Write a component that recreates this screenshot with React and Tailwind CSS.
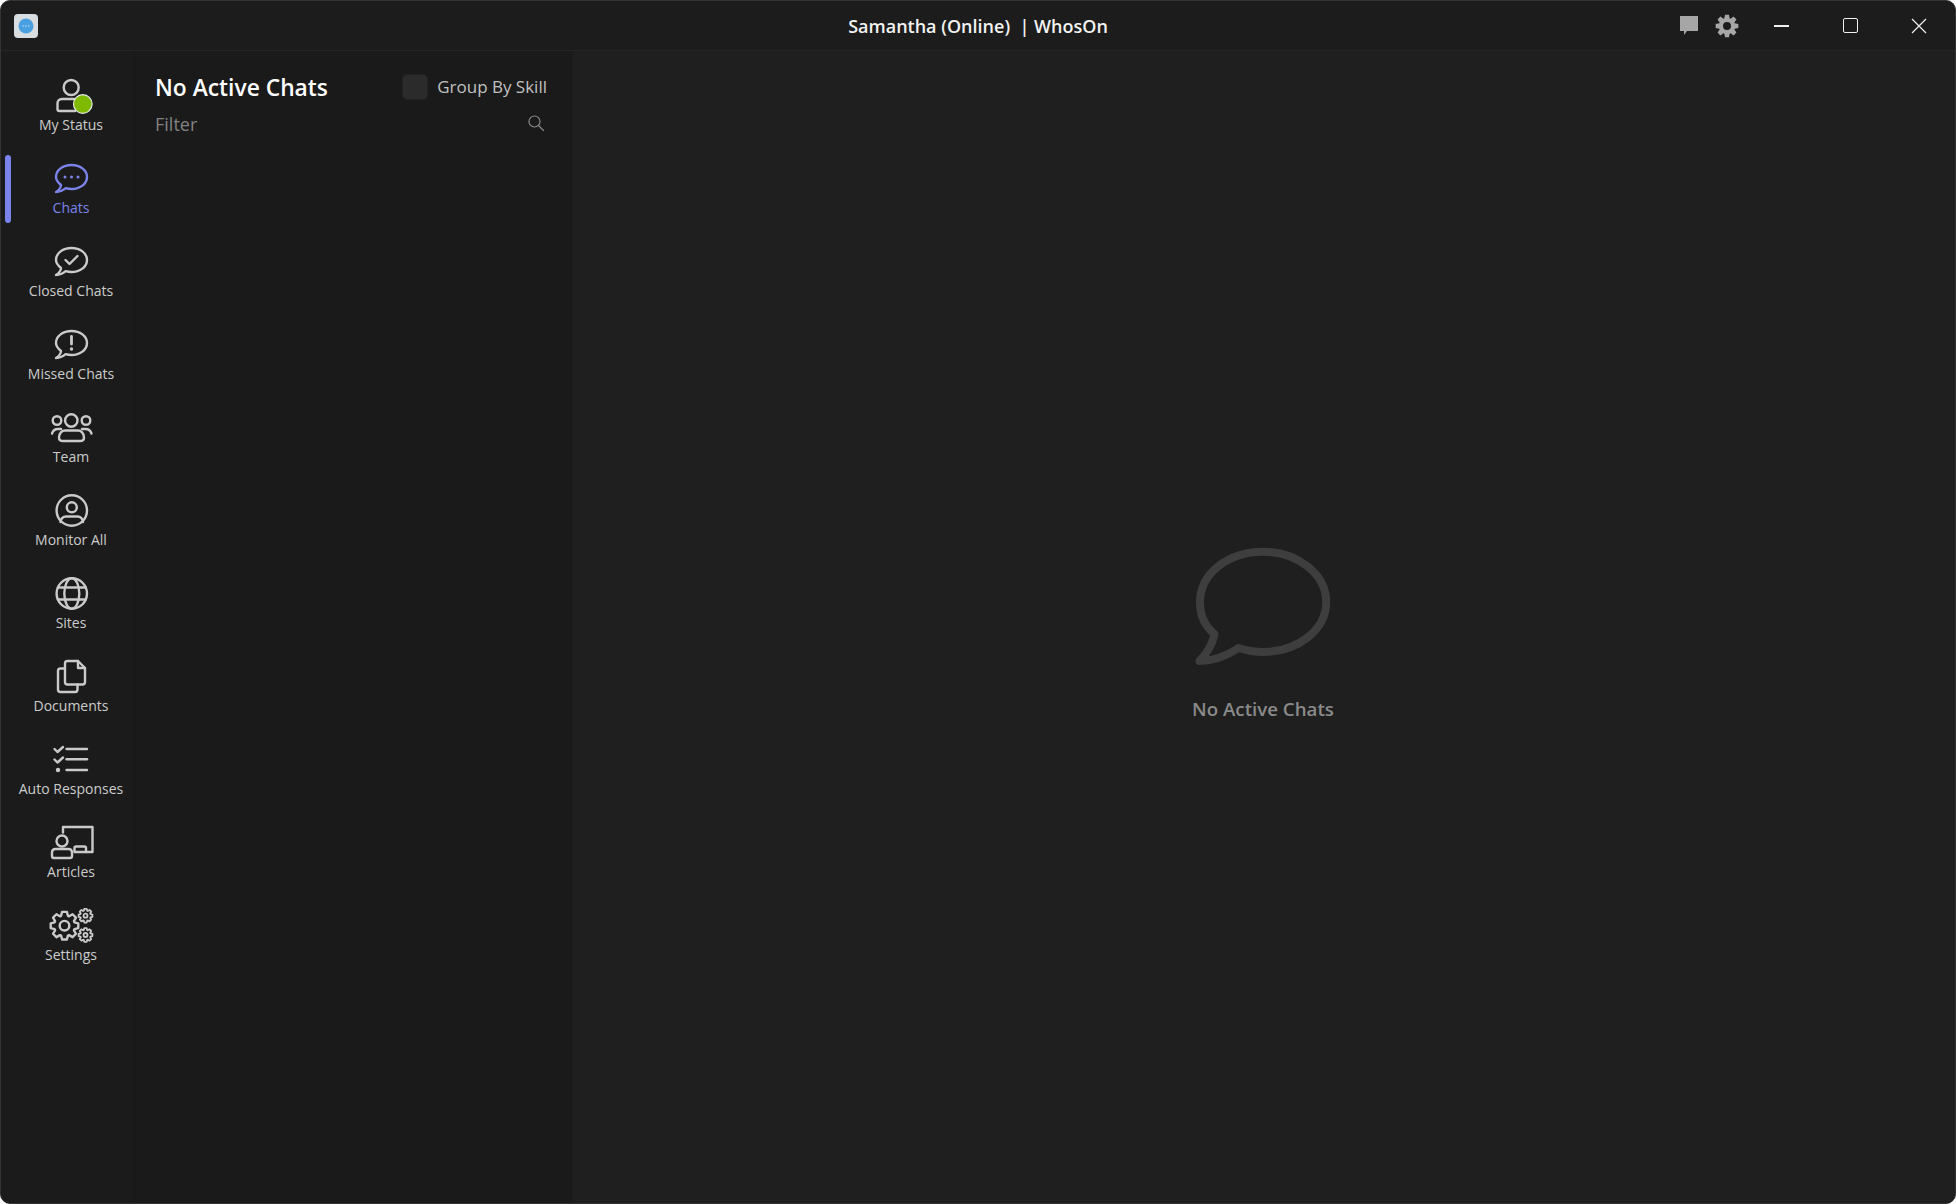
import React from 'react';

// gear outline, used by the settings nav icon and the title bar
const gearPath = (cx, cy, outer, inner, teeth) => {
  const pts = [];
  const step = (Math.PI * 2) / teeth;
  for (let i = 0; i < teeth; i++) {
    const a = i * step - Math.PI / 2;
    const at = (r, o) => `${(cx + r * Math.cos(a + o)).toFixed(2)} ${(cy + r * Math.sin(a + o)).toFixed(2)}`;
    pts.push(at(inner, -step * 0.42), at(outer, -step * 0.22), at(outer, step * 0.22), at(inner, step * 0.42));
  }
  return `M${pts.join('L')}Z`;
};

const BUBBLE = 'M10 27C7 24.5 5 22 5 19C5 12 12 7 20.5 7C29 7 36 12 36 19C36 26 29 31 20.5 31C18.5 31 16.5 30.7 14.7 30.2C12 32.5 8.5 34 5 34C7.5 32.5 9.8 30 10 27Z';

const Svg = ({ children, className = 'text-[#cacaca]' }) => (
  <svg width="40" height="40" viewBox="0 0 40 40" fill="none" stroke="currentColor" strokeWidth="2.4" strokeLinecap="round" strokeLinejoin="round" className={`overflow-visible ${className}`}>
    {children}
  </svg>
);

const StatusIcon = () => (
  <Svg>
    <circle cx="20.2" cy="12.5" r="7.5" />
    <path d="M23 24H11C8 24 6.5 26 6.5 28.5V34C6.5 35.2 7.2 36 8.5 36H24" />
    <circle cx="31.8" cy="29" r="9.3" fill="#7fba00" stroke="#e8e8e8" strokeWidth="1.2" />
  </Svg>
);

const ChatsIcon = () => (
  <Svg className="text-[#7b83eb]">
    <path d={BUBBLE} />
    <circle cx="14" cy="19" r="1.5" fill="currentColor" stroke="none" />
    <circle cx="20.5" cy="19" r="1.5" fill="currentColor" stroke="none" />
    <circle cx="27" cy="19" r="1.5" fill="currentColor" stroke="none" />
  </Svg>
);

const ClosedIcon = () => (
  <Svg>
    <path d={BUBBLE} />
    <path d="M14.5 19L18.5 23L26.5 15" />
  </Svg>
);

const MissedIcon = () => (
  <Svg>
    <path d={BUBBLE} />
    <path d="M20.5 12.5V20" strokeWidth="2.8" />
    <circle cx="20.5" cy="25" r="1.7" fill="currentColor" stroke="none" />
  </Svg>
);

const TeamIcon = () => (
  <Svg>
    <circle cx="20.3" cy="13.5" r="6.2" />
    <circle cx="6" cy="13.5" r="4.3" />
    <circle cx="35" cy="13.5" r="4.3" />
    <path d="M12 34H29C31.5 34 33 32.5 33 30.5C33 26 30 23.5 27 23.5H14C11 23.5 8 26 8 30.5C8 32.5 9.5 34 12 34Z" />
    <path d="M1 26.5C2 23.5 4 22 7 22H10" />
    <path d="M40.5 26.5C39.5 23.5 37.5 22 34.5 22H31" />
  </Svg>
);

const MonitorIcon = () => (
  <Svg>
    <circle cx="20.8" cy="20.5" r="15.2" />
    <circle cx="20.8" cy="17.3" r="5" />
    <path d="M9.5 32C9.5 29 12 26.5 15 26.5H26.5C29.5 26.5 32 29 32 32" />
  </Svg>
);

const SitesIcon = () => (
  <Svg>
    <circle cx="20.8" cy="20.5" r="15.2" />
    <ellipse cx="20.8" cy="20.5" rx="7.5" ry="15.2" />
    <path d="M7 14.5H34.5" />
    <path d="M7 26.5H34.5" />
  </Svg>
);

const DocumentsIcon = () => (
  <Svg>
    <path d="M14 12.5H9.5C8 12.5 7 13.5 7 15V33.5C7 35 8 36 9.5 36H24C25.5 36 26.5 35 26.5 33.5V28.5" />
    <path d="M16.5 5H27L34 12V26C34 27.5 33 28.5 31.5 28.5H16.5C15 28.5 14 27.5 14 26V7.5C14 6 15 5 16.5 5Z" />
    <path d="M27 5V12H34" />
  </Svg>
);

const AutoIcon = () => (
  <Svg>
    <path d="M3.5 10L6.5 13L12 8" />
    <path d="M3.5 20.5L6.5 23.5L12 18.5" />
    <circle cx="7" cy="31" r="2.2" fill="currentColor" stroke="none" />
    <path d="M15.5 10H36" />
    <path d="M15.5 20.3H36" />
    <path d="M15.5 31H36" />
  </Svg>
);

const ArticlesIcon = () => (
  <Svg>
    <path d="M12 10.5V5H41.5V30H24" />
    <path d="M23.5 30V26C23.5 25 24 24.5 25 24.5H33.5C34.5 24.5 35 25 35 26V30" />
    <circle cx="11" cy="19" r="5.5" />
    <path d="M3 36H19C20.2 36 21 35.2 21 34V30.5C21 28.5 19.5 27 17.5 27H4.5C2.5 27 1 28.5 1 30.5V34C1 35.2 1.8 36 3 36Z" />
  </Svg>
);

const SettingsIcon = () => (
  <Svg>
    <path d={gearPath(13.5, 20.7, 14, 10.5, 8)} />
    <circle cx="13.5" cy="20.7" r="4.8" />
    <path d={gearPath(34.5, 10.7, 7, 5.2, 8)} strokeWidth="1.8" />
    <circle cx="34.5" cy="10.7" r="2" strokeWidth="1.8" />
    <path d={gearPath(34.5, 30, 7, 5.2, 8)} strokeWidth="1.8" />
    <circle cx="34.5" cy="30" r="2" strokeWidth="1.8" />
  </Svg>
);

const navItems = [
  { label: 'My Status', icon: StatusIcon },
  { label: 'Chats', icon: ChatsIcon, active: true },
  { label: 'Closed Chats', icon: ClosedIcon },
  { label: 'Missed Chats', icon: MissedIcon },
  { label: 'Team', icon: TeamIcon },
  { label: 'Monitor All', icon: MonitorIcon },
  { label: 'Sites', icon: SitesIcon },
  { label: 'Documents', icon: DocumentsIcon },
  { label: 'Auto Responses', icon: AutoIcon },
  { label: 'Articles', icon: ArticlesIcon },
  { label: 'Settings', icon: SettingsIcon },
];

const TitleBar = () => (
  <div className="grid h-[50px] shrink-0 grid-cols-[1fr_auto_1fr] items-center border-b border-[#252525] bg-[#1c1c1c]">
    <div className="ml-[13px] flex h-6 w-6 items-center justify-center rounded-[4px] bg-[#d8dde2]">
      <svg width="16" height="16" viewBox="0 0 16 16">
        <circle cx="8" cy="8" r="7.5" fill="#4a9fe0" />
        <path d="M4.5 8H11.5" stroke="#e6f2fb" strokeWidth="1.2" strokeDasharray="1.2 1.6" />
      </svg>
    </div>
    <div className="whitespace-pre pt-[2px] text-center text-[18px] font-semibold text-[#f2f2f2]">
      Samantha (Online)  | WhosOn
    </div>
    <div className="flex items-center justify-end">
      <svg width="18" height="19" viewBox="0 0 18 19" fill="#a6a6a6" className="mr-[17px]">
        <path d="M0 0H18V15H7L4 19V15H0Z" />
      </svg>
      <svg width="24" height="24" viewBox="0 0 24 24" className="mr-[35px]">
        <path fillRule="evenodd" fill="#a6a6a6" d={`${gearPath(12, 12, 11.5, 8.2, 8)}M12 8a4 4 0 1 0 0 8a4 4 0 1 0 0-8Z`} />
      </svg>
      <div className="mr-[54px] h-[2px] w-[15px] bg-[#f0f0f0]" />
      <div className="mr-[53px] h-[15px] w-[15px] rounded-[2px] border border-[#f0f0f0]" />
      <svg width="16" height="16" viewBox="0 0 16 16" stroke="#f0f0f0" strokeWidth="1.2" className="mr-[28px]">
        <path d="M1 1L15 15M15 1L1 15" />
      </svg>
    </div>
  </div>
);

const Sidebar = () => (
  <nav className="w-[134px] shrink-0 border-r border-[#181818] bg-[#1b1b1b] pt-[21px]">
    {navItems.map(item => {
      const Icon = item.icon;
      return (
        <div key={item.label} className="relative flex h-[83px] flex-col items-center pl-[7px]">
          {item.active && <div className="absolute left-[4px] top-0 h-[68px] w-[6px] rounded-full bg-[#7b83eb]" />}
          <div className="flex h-[46px] items-center">
            <Icon />
          </div>
          <span className={`h-[14px] whitespace-nowrap text-[14px] leading-[14px] ${item.active ? 'text-[#7b83eb]' : 'text-[#cccccc]'}`}>
            {item.label}
          </span>
        </div>
      );
    })}
  </nav>
);

const ChatList = () => (
  <section className="w-[438px] shrink-0 border-r border-[#1c1c1c] bg-[#1a1a1a] pl-[20px] pr-[25px] pt-[22px]">
    <div className="flex h-[28px] items-center justify-between">
      <h1 className="pt-[2px] text-[22.8px] font-semibold leading-[28px] text-white">No Active Chats</h1>
      <label className="flex items-center gap-[9px]">
        <span className="h-[26px] w-[26px] rounded-[5px] border border-[#222222] bg-[#2b2b2b]" />
        <span className="text-[17px] text-[#c0c0c0]">Group By Skill</span>
      </label>
    </div>
    <div className="mt-[9px] flex h-[28px] items-center justify-between pr-[3px]">
      <span className="text-[18px] text-[#828282]">Filter</span>
      <svg width="16" height="16" viewBox="0 0 16 16" fill="none" stroke="#8a8a8a" strokeWidth="1.2" strokeLinecap="round" className="-mt-[3px]">
        <circle cx="6.5" cy="6.5" r="5.5" />
        <path d="M10.5 10.5L15.5 15.5" />
      </svg>
    </div>
  </section>
);

const EmptyState = () => (
  <main className="flex flex-1 flex-col items-center justify-center bg-[#1f1f1f] pt-[14px]">
    <svg width="140" height="125" viewBox="33.5 15 140 125" fill="none" stroke="#3e3e3e" strokeWidth="8" strokeLinejoin="round">
      <path d="M54 104C44 96 39.5 85 39.5 72C39.5 44 67 21.7 102.5 21.7C137 21.7 165.7 44 165.7 72C165.7 100 137 122 102.5 122C94 122 86 120.5 78 118C66 126 52 131 39 131C46 124 52 114 54 104Z" />
    </svg>
    <p className="mt-[25px] pr-[2px] text-[18.7px] font-semibold leading-[28px] text-[#8a8a8a]">No Active Chats</p>
  </main>
);

const App = () => (
  <div className="flex h-[1204px] w-[1956px] flex-col overflow-hidden rounded-[10px] border border-[#333333] bg-[#1c1c1c] font-['Open_Sans','Noto_Sans',sans-serif]">
    <TitleBar />
    <div className="flex min-h-0 flex-1">
      <Sidebar />
      <ChatList />
      <EmptyState />
    </div>
  </div>
);

export default App;
